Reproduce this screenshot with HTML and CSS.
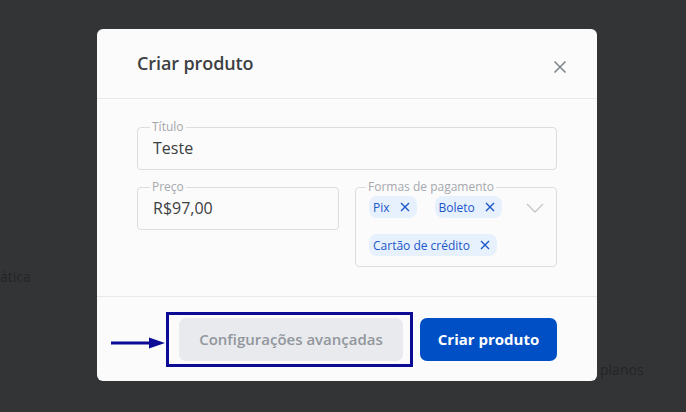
FILE: index.html
```html
<!DOCTYPE html>
<html lang="pt-BR">
<head>
<meta charset="utf-8">
<link rel="stylesheet" href="styles.css">
</head>
<body>
<div class="backdrop-text bt-1">ática</div>
<div class="backdrop-text bt-2">planos</div>
<div class="modal">
  <div class="modal-header">
    <h2 class="modal-title">Criar produto</h2>
    <button class="close-btn" aria-label="Fechar">
      <svg width="14" height="14" viewBox="0 0 14 14"><path d="M1.5 1.5 L12.5 12.5 M12.5 1.5 L1.5 12.5" stroke="#80868b" stroke-width="1.6" fill="none"/></svg>
    </button>
  </div>
  <div class="modal-body">
    <fieldset class="field field-full">
      <legend>Título</legend>
      <div class="value">Teste</div>
    </fieldset>
    <div class="row">
      <fieldset class="field field-price">
        <legend>Preço</legend>
        <div class="value">R$97,00</div>
      </fieldset>
      <fieldset class="field field-pay">
        <legend>Formas de pagamento</legend>
        <div class="chips">
          <span class="chip">Pix <svg class="chip-x" width="10" height="10" viewBox="0 0 10 10"><path d="M1 1 L9 9 M9 1 L1 9" stroke="#1a56c8" stroke-width="1.4" fill="none"/></svg></span>
          <span class="chip">Boleto <svg class="chip-x" width="10" height="10" viewBox="0 0 10 10"><path d="M1 1 L9 9 M9 1 L1 9" stroke="#1a56c8" stroke-width="1.4" fill="none"/></svg></span>
          <span class="chip">Cartão de crédito <svg class="chip-x" width="10" height="10" viewBox="0 0 10 10"><path d="M1 1 L9 9 M9 1 L1 9" stroke="#1a56c8" stroke-width="1.4" fill="none"/></svg></span>
        </div>
        <svg class="chevron" width="18" height="10" viewBox="0 0 18 10"><path d="M1 1 L9 9 L17 1" stroke="#c4c7cc" stroke-width="1.4" fill="none"/></svg>
      </fieldset>
    </div>
  </div>
  <div class="modal-footer">
    <div class="highlight">
      <svg class="arrow" width="56" height="14" viewBox="0 0 56 14"><path d="M0 7 H40" stroke="#0b0b96" stroke-width="3"/><path d="M38 1.5 L54 7 L38 12.5 Z" fill="#0b0b96"/></svg>
      <button class="btn btn-secondary">Configurações avançadas</button>
    </div>
    <button class="btn btn-primary">Criar produto</button>
  </div>
</div>
</body>
</html>
```
FILE: styles.css
```css
* { box-sizing: border-box; }
html, body { margin: 0; padding: 0; }
body {
  width: 686px;
  height: 412px;
  background: #333436;
  font-family: "Open Sans", "Roboto", sans-serif;
  overflow: hidden;
  position: relative;
  padding-top: 29px;
  padding-left: 97px;
}
.backdrop-text {
  position: absolute;
  color: #242528;
  font-size: 14px;
  font-family: "Open Sans", sans-serif;
}
.bt-1 { left: 0; top: 267px; }
.bt-2 { left: 600px; top: 360px; }
.modal {
  position: relative;
  width: 500px;
  height: 352px;
  background: #fbfbfb;
  border-radius: 6px;
  display: flex;
  flex-direction: column;
}
.modal-header {
  height: 70px;
  padding: 0 30px 0 40px;
  display: flex;
  align-items: center;
  justify-content: space-between;
  border-bottom: 1px solid #e8e9eb;
}
.modal-title {
  margin: 0;
  font-size: 18px;
  font-weight: 600;
  color: #3c4043;
  padding-bottom: 2px;
  letter-spacing: -0.1px;
}
.close-btn {
  background: none;
  border: 0;
  padding: 0;
  width: 14px;
  height: 14px;
  margin-top: 6px;
  display: flex;
}
.modal-body {
  padding: 22px 40px 0 40px;
  height: 198px;
  border-bottom: 1px solid #e8e9eb;
}
.field {
  margin: 0;
  border: 1px solid #dcdde0;
  border-radius: 4px;
  padding: 0 14px 0 15px;
  min-width: 0;
}
.field legend {
  font-size: 12px;
  color: #a5a8ad;
  padding: 0 2px;
  margin-left: -3px;
  line-height: 12px;
}
.field-full { height: 49px; }
.value {
  font-size: 16px;
  color: #3c4043;
  line-height: 20px;
  padding-top: 5px;
}
.row {
  display: flex;
  gap: 16px;
  margin-top: 11px;
  align-items: flex-start;
}
.field-price { width: 202px; height: 49px; }
.field-pay {
  width: 202px;
  height: 86px;
  padding: 0 14px 0 13px;
  position: relative;
}
.chips {
  display: flex;
  flex-wrap: wrap;
  column-gap: 18px;
  row-gap: 16px;
  padding-top: 3px;
  width: 150px;
}
.chip {
  display: inline-flex;
  align-items: center;
  gap: 10px;
  background: #e7f1fe;
  color: #1a56c8;
  font-size: 12px;
  font-weight: 500;
  height: 22px;
  padding: 0 7px 0 4px;
  border-radius: 8px;
  white-space: nowrap;
}
.chevron {
  position: absolute;
  right: 12px;
  top: 10px;
}
.modal-footer {
  flex: 1;
  display: flex;
  align-items: center;
  justify-content: flex-end;
  padding: 0 40px;
  gap: 7px;
}
.highlight {
  position: relative;
  border: 3px solid #0b0b96;
  padding: 3px 7px 3px 10px;
  display: flex;
}
.arrow {
  position: absolute;
  left: -58px;
  top: 21px;
}
.btn {
  border: 0;
  border-radius: 7px;
  height: 43px;
  font-family: inherit;
  font-size: 15px;
  cursor: pointer;
}
.btn-secondary {
  width: 224px;
  background: #e8eaed;
  color: #92969d;
  font-weight: 600;
}
.btn-primary {
  width: 137px;
  background: #004fc4;
  color: #ffffff;
  font-weight: 700;
}
```
